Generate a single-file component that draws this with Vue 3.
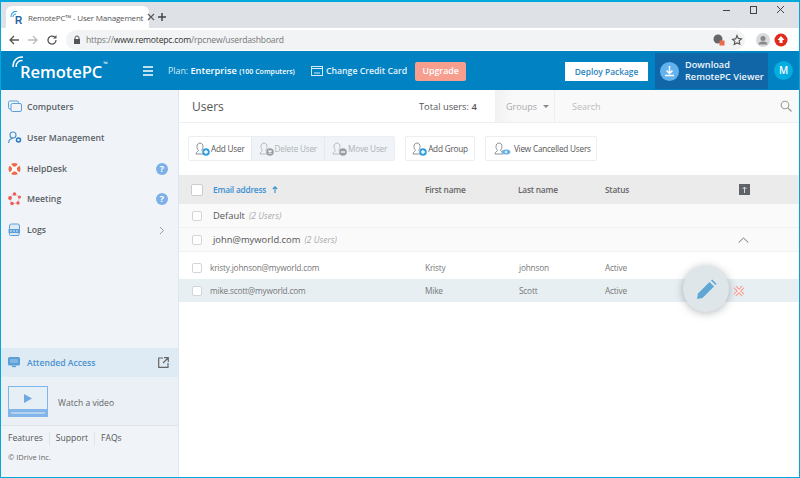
<template>
  <div class="window">
    <!-- browser chrome -->
    <div class="tabstrip">
      <div class="tab">
        <svg class="favicon" width="14" height="16" viewBox="0 0 14 16">
          <path d="M1 8a5 5 0 0 1 6-5.500M3 8a3 3 0 0 1 3-3" fill="none" stroke="#3aa6e8" stroke-width="1.200" />
          <text x="5" y="14.500" class="favicon-r">R</text>
        </svg>
        <span class="tab-title">RemotePC™ - User Management</span>
        <svg class="tab-close" width="8" height="8" viewBox="0 0 8 8"><path d="M1 1l6 6M7 1L1 7" stroke="#555" stroke-width="1.100" /></svg>
      </div>
      <svg class="newtab" width="8" height="8" viewBox="0 0 8 8"><path d="M4 0v8M0 4h8" stroke="#444" stroke-width="1.500" /></svg>
      <div class="winbtns">
        <svg width="10" height="10" viewBox="0 0 10 10"><path d="M1 5.500h7" stroke="#444" /></svg>
        <svg width="10" height="10" viewBox="0 0 10 10"><rect x="1.500" y="1.500" width="6" height="7" fill="none" stroke="#444" /></svg>
        <svg width="10" height="10" viewBox="0 0 10 10"><path d="M1 1l7 7M8 1L1 8" stroke="#444" /></svg>
      </div>
    </div>
    <div class="addrbar">
      <svg width="12" height="12" viewBox="0 0 12 12"><path d="M11 6H2M6 2L2 6l4 4" fill="none" stroke="#555" stroke-width="1.300" /></svg>
      <svg width="12" height="12" viewBox="0 0 12 12"><path d="M1 6h9M6 2l4 4-4 4" fill="none" stroke="#bbb" stroke-width="1.300" /></svg>
      <svg width="12" height="12" viewBox="0 0 12 12"><path d="M10 6a4 4 0 1 1-1.200-2.800" fill="none" stroke="#555" stroke-width="1.300" /><path d="M10.500 1v3.500H7z" fill="#555" /></svg>
      <div class="omnibox">
        <svg width="8" height="10" viewBox="0 0 8 10"><rect x="1" y="4" width="6" height="5" fill="#555" /><path d="M2 4V3a2 2 0 0 1 4 0v1" fill="none" stroke="#555" /></svg>
        <span class="url"><span class="url-dim">https://</span>www.remotepc.com<span class="url-dim">/rpcnew/userdashboard</span></span>
        <svg width="14" height="14" viewBox="0 0 14 14"><circle cx="6" cy="6" r="4.500" fill="#666" /><rect x="7.500" y="7.500" width="5" height="5" fill="#ea6a4a" /></svg>
        <svg class="omni-star" width="12" height="12" viewBox="0 0 12 12"><path d="M6 1.500l1.300 2.900 3.200.4-2.400 2.100.7 3.100L6 8.900l-2.800 1.600.7-3.100-2.400-2.100 3.200-.4z" fill="none" stroke="#555" stroke-width="1.100" /></svg>
      </div>
      <svg class="avatar" width="14" height="14" viewBox="0 0 14 14"><circle cx="7" cy="7" r="7" fill="#d8dadd" /><circle cx="7" cy="5.500" r="2.500" fill="#888" /><path d="M2.500 11.500a4.500 3 0 0 1 9 0z" fill="#888" /></svg>
      <svg class="ext" width="14" height="14" viewBox="0 0 14 14"><circle cx="7" cy="7" r="6.500" fill="#e02b1c" /><path d="M7 3l3.500 4H8.500v3h-3V7H3.500z" fill="#fff" /></svg>
    </div>

    <!-- app header -->
    <header class="topbar">
      <div class="logo">
        <svg class="logo-arcs" width="12" height="12" viewBox="0 0 12 12"><path d="M1.200 11a8.500 8.500 0 0 1 9.800-9.800M4.200 11a5.500 5.500 0 0 1 6.300-6.300" fill="none" stroke="#fff" stroke-width="1.500" /></svg>
        <span class="logo-text">RemotePC</span><span class="logo-tm">™</span>
      </div>
      <svg class="burger" width="14" height="10" viewBox="0 0 14 10"><path d="M2 1h10M2 5h10M2 9h10" stroke="#fff" stroke-width="1.300" /></svg>
      <div class="plan">Plan: <b>Enterprise</b> <b class="plan-small">(100 Computers)</b></div>
      <div class="card-link">
        <svg width="12" height="10" viewBox="0 0 12 10"><rect x=".5" y=".5" width="11" height="9" fill="none" stroke="#d6ecf8" /><path d="M1 2.500h10M3 7h6" stroke="#d6ecf8" /></svg>
        <span>Change Credit Card</span>
      </div>
      <div class="upgrade">Upgrade</div>
      <div class="deploy">Deploy Package</div>
      <div class="download">
        <svg width="19" height="19" viewBox="0 0 19 19"><circle cx="9.500" cy="9.500" r="9.500" fill="#62b2ee" /><path d="M9.500 4v7M6.500 8.500l3 3 3-3M5 13.500h9" fill="none" stroke="#fff" stroke-width="1.500" /></svg>
        <div class="download-text">Download<br />RemotePC Viewer</div>
      </div>
      <div class="user-badge">M</div>
    </header>

    <div class="body">
      <aside class="sidebar">
        <nav class="nav">
          <div v-for="item in navItems" :key="item.name" class="nav-item">
            <svg class="nav-icon" width="14" height="14" viewBox="0 0 14 14" v-html="item.icon"></svg>
            <span class="nav-label">{{ item.name }}</span>
            <span v-if="item.help" class="help">?</span>
            <svg v-if="item.arrow" class="nav-arrow" width="6" height="9" viewBox="0 0 6 9"><path d="M1 1l3.500 3.500L1 8" fill="none" stroke="#999" /></svg>
          </div>
        </nav>
        <div class="attended">
          <svg width="12" height="11" viewBox="0 0 12 11"><rect width="12" height="8.500" rx="1.500" fill="#5a9fd8" /><path d="M2 3h8M2 5h8" stroke="#cfe4f5" stroke-width=".7" /><path d="M4 9.500h4" stroke="#5a9fd8" stroke-width="1.300" /></svg>
          <span class="attended-label">Attended Access</span>
          <svg width="11" height="11" viewBox="0 0 11 11"><path d="M5 1H.7v9.300H10V6M6 .7h4.300V5M10 1L5 6" fill="none" stroke="#666" stroke-width="1.200" /></svg>
        </div>
        <div class="video">
          <svg width="40" height="31" viewBox="0 0 40 31"><rect x=".5" y=".5" width="39" height="30" fill="#e6eef6" stroke="#82b6e8" /><rect y="23" width="40" height="8" fill="#82b6e8" /><path d="M16 8l8 4.500-8 4.500z" fill="#6ea9e2" /><path d="M3 27h34" stroke="#e6eef6" /></svg>
          <span class="video-label">Watch a video</span>
        </div>
        <div class="links">
          <span>Features</span><span>Support</span><span>FAQs</span>
        </div>
        <div class="copy">© IDrive Inc.</div>
      </aside>

      <main class="main">
        <div class="title-row">
          <h1>Users</h1>
          <div class="total">Total users: <b>4</b></div>
          <div class="filter">
            <div class="groups">Groups <i class="caret"></i></div>
            <div class="search">
              <span>Search</span>
              <svg width="12" height="12" viewBox="0 0 12 12"><circle cx="5" cy="5" r="3.800" fill="none" stroke="#999" stroke-width="1.100" /><path d="M8 8l3.500 3.500" stroke="#999" stroke-width="1.300" /></svg>
            </div>
          </div>
        </div>

        <div class="toolbar">
          <div class="btn-group">
            <div class="tbtn"><svg width="15" height="14" viewBox="0 0 15 14" v-html="userIcon('#8a9099', '#2f9fe0', 'plus')"></svg>Add User</div>
            <div class="tbtn off"><svg width="15" height="14" viewBox="0 0 15 14" v-html="userIcon('#b8bcc0', '#9a9ea2', 'x')"></svg>Delete User</div>
            <div class="tbtn off"><svg width="15" height="14" viewBox="0 0 15 14" v-html="userIcon('#b8bcc0', '#9a9ea2', 'minus')"></svg>Move User</div>
          </div>
          <div class="tbtn solo"><svg width="15" height="14" viewBox="0 0 15 14" v-html="userIcon('#8a9099', '#2f9fe0', 'plus')"></svg>Add Group</div>
          <div class="tbtn solo cancelled"><svg width="19" height="14" viewBox="0 0 19 14"><path d="M3 12c0-2 2-2.500 2.500-3.500C4.500 7.500 4 6 4 4.500 4 2.500 5.200 1 7 1s3 1.500 3 3.500c0 1.500-.5 3-1.500 4 .5 1 2 1.200 2.500 2" fill="none" stroke="#8a9099" /><path d="M3 12h8" stroke="#8a9099" /><ellipse cx="14" cy="10" rx="4.500" ry="2.500" fill="#6fb2e2" /><circle cx="14" cy="10" r="1" fill="#fff" /></svg>View Cancelled Users</div>
        </div>

        <div class="grid head">
          <span class="check big"></span>
          <span class="sort">Email address <svg width="6" height="7" viewBox="0 0 6 7"><path d="M3 7V1M.8 3L3 .8 5.200 3" fill="none" stroke="#3a8fd0" stroke-width="1.100" /></svg></span>
          <span>First name</span>
          <span>Last name</span>
          <span>Status</span>
          <span class="export"><svg width="11" height="11" viewBox="0 0 11 11"><rect width="11" height="11" fill="#5f6368" /><path d="M5.500 9V3M3.500 5l2-2 2 2" fill="none" stroke="#d5d7da" /></svg></span>
        </div>

        <div class="group">
          <span class="check"></span>
          <span class="group-name">Default</span>
          <em>(2 Users)</em>
        </div>
        <div class="group">
          <span class="check"></span>
          <span class="group-name">john@myworld.com</span>
          <em>(2 Users)</em>
          <svg class="collapse" width="11" height="6" viewBox="0 0 11 6"><path d="M.7 5.500L5.500 1l4.800 4.500" fill="none" stroke="#777" /></svg>
        </div>

        <div class="grid row" v-for="user in users" :key="user.email" :class="{ hovered: user.hovered }">
          <span class="check"></span>
          <span>{{ user.email }}</span>
          <span>{{ user.first }}</span>
          <span>{{ user.last }}</span>
          <span>{{ user.status }}</span>
          <span class="row-actions">
            <template v-if="user.hovered">
              <span class="pencil">
                <svg width="21" height="21" viewBox="0 0 21 21"><path d="M1 20l1-5.500L13.500 3l4.500 4.500L6.500 19z" fill="#5fa6d3" /><path d="M15 1.500l1.200-1 4.300 4.300-1 1.200z" fill="#5fa6d3" /></svg>
              </span>
              <svg class="remove" width="12" height="12" viewBox="0 0 12 12"><path d="M2 2l8 8M10 2l-8 8" stroke="#f09a90" stroke-width="3.500" /><path d="M2 2l8 8M10 2l-8 8" stroke="#fdf1ef" stroke-width="1.500" /></svg>
            </template>
          </span>
        </div>
      </main>
    </div>
  </div>
</template>

<script setup>
const navItems = [
  { name: 'Computers', icon: '<rect x=".5" y="1" width="10" height="8" rx="1.500" fill="none" stroke="#5a9fd8"/><rect x="3" y="3.500" width="10.500" height="8" rx="1.500" fill="#f0f4f8" stroke="#5a9fd8"/>' },
  { name: 'User Management', icon: '<circle cx="5" cy="4" r="3" fill="none" stroke="#4a90d0" stroke-width="1.100"/><path d="M.7 12c0-3 2-4.500 4.300-4.500" fill="none" stroke="#4a90d0" stroke-width="1.100"/><circle cx="10.500" cy="9" r="2" fill="none" stroke="#2a78c0" stroke-width="1.500"/>' },
  { name: 'HelpDesk', help: true, icon: '<circle cx="6.500" cy="7" r="6" fill="#ee6a48"/><circle cx="6.500" cy="7" r="2.600" fill="#fff"/><path d="M2 2.500l3 3M11 2.500l-3 3M2 11.500l3-3M11 11.500l-3-3" stroke="#fff" stroke-width="1.800"/>' },
  { name: 'Meeting', help: true, icon: '<circle cx="6.500" cy="7" r="4.500" fill="none" stroke="#f08a85" stroke-width=".6"/><circle cx="6.500" cy="2" r="1.700" fill="#ee5a58"/><circle cx="11.500" cy="5" r="1.500" fill="#ee5a58"/><circle cx="10" cy="11" r="1.700" fill="#ee5a58"/><circle cx="4" cy="11.500" r="1.800" fill="#ee5a58"/><circle cx="2" cy="6" r="1.900" fill="#ee5a58"/>' },
  { name: 'Logs', arrow: true, icon: '<path d="M1.500 7V3a2 2 0 0 1 2-2h6a2 2 0 0 1 2 2v4" fill="#dcebf6" stroke="#5a9fd8"/><rect x=".5" y="6" width="11.500" height="4" fill="#5a9fd8"/><path d="M2 8h8.500" stroke="#dcebf6" stroke-dasharray="2 1"/><path d="M1.500 10v1.500a1 1 0 0 0 1 1h7.500a1 1 0 0 0 1-1V10" fill="#dcebf6" stroke="#5a9fd8"/>' },
]

const users = [
  { email: 'kristy.johnson@myworld.com', first: 'Kristy', last: 'johnson', status: 'Active' },
  { email: 'mike.scott@myworld.com', first: 'Mike', last: 'Scott', status: 'Active', hovered: true },
]

// little person outline with a round badge, shared by the toolbar buttons
const userIcon = (line, badge, mark) => {
  const marks = {
    plus: 'M10.500 10h4M12.500 8v4',
    x: 'M11 8.500l3 3M14 8.500l-3 3',
    minus: 'M10.500 10h4',
  }
  return `<path d="M1 12c0-2 2-2.500 2.500-3.500C2.500 7.500 2 6 2 4.500 2 2.500 3.200 1 5 1s3 1.500 3 3.500c0 1.500-.5 3-1.500 4" fill="none" stroke="${line}"/><path d="M1 12h8" stroke="${line}"/><circle cx="11" cy="10" r="3.800" fill="${badge}"/><path transform="translate(-1.500)" d="${marks[mark]}" stroke="#fff" stroke-width="1.300"/>`
}
</script>

<style>
html, body { margin: 0; background: #fff; }
</style>

<style scoped>
.window {
  width: 800px;
  height: 478px;
  box-sizing: border-box;
  border: 1px solid #00a8dc;
  border-top-width: 2px;
  display: flex;
  flex-direction: column;
  overflow: hidden;
  font-family: "Open Sans", "Liberation Sans", sans-serif;
  color: #555;
}
svg { flex: none; }
.tabstrip {
  height: 26px;
  background: #dee1e6;
  display: flex;
  align-items: flex-end;
  flex: none;
}
.tab {
  width: 143px;
  height: 22px;
  margin-left: 5px;
  background: #fff;
  border-radius: 6px 6px 0 0;
  display: flex;
  align-items: center;
  padding: 0 5px 0 4px;
  box-sizing: border-box;
  gap: 4px;
  flex: none;
}
.favicon-r { font: bold 10px "Liberation Sans", sans-serif; fill: #1f5f9e; }
.tab-title { font-size: 8px; letter-spacing: -.2px; color: #555; white-space: nowrap; flex: 1; }
.newtab { margin: 0 0 7px 9px; }
.winbtns {
  margin-left: auto;
  align-self: flex-start;
  padding: 3px 13px 0 0;
  display: flex;
  gap: 17px;
}
.addrbar {
  height: 23px;
  background: #fff;
  flex: none;
  display: flex;
  align-items: center;
  padding: 0 11px 0 7px;
  gap: 7px;
}
.omnibox {
  flex: 1;
  margin-left: 1px;
  height: 20px;
  background: #f1f3f4;
  border-radius: 10px;
  display: flex;
  align-items: center;
  padding: 0 0 0 7px;
  gap: 5px;
}
.url { font-size: 8.600px; letter-spacing: -.2px; color: #333; flex: 1; }
.url-dim { color: #777; }
.omni-star { margin-right: 2px; }
.avatar { margin-left: 4px; }
.ext { margin-left: -3px; }
.topbar {
  height: 39px;
  flex: none;
  background: #0082c3;
  display: flex;
  align-items: center;
  color: #fff;
}
.logo {
  width: 130px;
  position: relative;
  padding-left: 19px;
  box-sizing: border-box;
  display: flex;
  align-items: flex-start;
  flex: none;
}
.logo-arcs { position: absolute; left: 11px; top: -3px; }
.logo-text { font-size: 16.600px; font-weight: 600; line-height: 22px; margin-top: 2px; letter-spacing: -.1px; }
.logo-tm { font-size: 6px; margin: 0 0 0 1px; line-height: 10px; }
.burger { margin-left: 10px; }
.plan { margin-left: 13px; width: 143px; font-size: 8.800px; color: #d8edf8; white-space: nowrap; flex: none; }
.plan b { color: #fff; font-weight: 600; font-size: 9.300px; }
.plan .plan-small { font-size: 7px; }
.card-link {
  display: flex;
  align-items: center;
  gap: 3px;
  font-size: 8.700px;
  font-weight: 600;
  white-space: nowrap;
  color: #e6f3fb;
}
.upgrade {
  margin-left: 8px;
  width: 51px;
  height: 19px;
  background: #f79e8e;
  border-radius: 2px;
  text-align: center;
  font-size: 8.800px;
  font-weight: 600;
  line-height: 19px;
  margin-top: 1px;
}
.deploy {
  margin-left: auto;
  width: 83px;
  height: 19px;
  background: #fff;
  color: #2b82c0;
  text-align: center;
  font-size: 8.400px;
  font-weight: 600;
  line-height: 19px;
  margin-top: 1px;
}
.download {
  margin-left: 7px;
  width: 113px;
  height: 36px;
  background: #1166a8;
  display: flex;
  align-items: center;
  padding-left: 5px;
  box-sizing: border-box;
  gap: 6px;
  align-self: flex-start;
  margin-top: 2px;
}
.download-text { font-size: 9.200px; font-weight: 600; line-height: 12px; white-space: nowrap; color: #eef6fc; }
.user-badge {
  width: 19px;
  height: 19px;
  border-radius: 50%;
  background: #04acdf;
  margin: 0 6px 0 6px;
  text-align: center;
  font-size: 10px;
  font-weight: 600;
  line-height: 19px;
  flex: none;
}
.body { flex: 1; display: flex; min-height: 0; }
.sidebar {
  width: 177px;
  flex: none;
  background: #f0f4f8;
  border-right: 1px solid #dfe7ee;
  display: flex;
  flex-direction: column;
}
.nav { flex: 1; padding-top: 2px; }
.nav-item {
  height: 30.700px;
  display: flex;
  align-items: center;
  padding: 0 10px 0 7px;
}
.nav-label { margin-left: 5px; font-size: 8.700px; font-weight: 600; color: #5a5f66; flex: 1; white-space: nowrap; }
.help {
  width: 12px;
  height: 12px;
  border-radius: 50%;
  background: #7db0e8;
  color: #fff;
  font-size: 9px;
  font-weight: 700;
  line-height: 12px;
  text-align: center;
}
.nav-arrow { margin-right: 3px; }
.attended {
  height: 29px;
  background: #deebf4;
  display: flex;
  align-items: center;
  padding: 0 9px 0 7px;
  gap: 7px;
  flex: none;
}
.attended-label { flex: 1; font-size: 8.600px; font-weight: 600; color: #4a90d0; }
.video {
  height: 48px;
  background: #eaf0f5;
  border-bottom: 1px solid #dde4ea;
  display: flex;
  align-items: center;
  padding-left: 7px;
  gap: 10px;
  font-size: 8.600px;
  color: #666;
  flex: none;
}
.video-label { margin-top: 3px; }
.links {
  display: flex;
  font-size: 8.600px;
  color: #555;
  padding: 6px 0 0 7px;
  flex: none;
}
.links span { padding-right: 6px; margin-right: 6px; border-right: 1px solid #dde4ea; line-height: 13px; }
.links span:last-child { border: 0; }
.copy { font-size: 7.500px; line-height: 10px; color: #666; padding: 7px 0 15px 7px; flex: none; }
.main { flex: 1; min-width: 0; }
.title-row {
  height: 33px;
  display: flex;
  align-items: center;
  border-bottom: 1px solid #edf0f2;
  box-sizing: border-box;
}
h1 { margin: 0 0 0 13px; font-size: 12px; font-weight: 400; color: #555; width: 227px; flex: none; }
.total { width: 76px; font-size: 9.300px; color: #555; white-space: nowrap; flex: none; }
.total b { font-weight: 600; }
.filter {
  flex: 1;
  height: 100%;
  display: flex;
  align-items: center;
  background: linear-gradient(90deg, #f1f1f1, #f9f9f9 6%);
  color: #aaa;
  font-size: 9px;
}
.groups {
  width: 60px;
  padding-left: 11px;
  box-sizing: border-box;
  height: 100%;
  display: flex;
  align-items: center;
  gap: 6px;
  border-right: 1px solid #eceeef;
}
.caret {
  width: 0;
  height: 0;
  border: 3px solid transparent;
  border-top: 3px solid #888;
  border-bottom: 0;
}
.search {
  flex: 1;
  display: flex;
  justify-content: space-between;
  align-items: center;
  padding: 0 7px 0 17px;
  color: #bbb;
}
.toolbar {
  height: 52px;
  box-sizing: border-box;
  padding: 13px 0 0 9px;
  display: flex;
  align-items: flex-start;
  gap: 10px;
}
.btn-group {
  display: flex;
  border: 1px solid #eceff1;
  border-radius: 2px;
  height: 25px;
  box-sizing: border-box;
}
.tbtn {
  display: flex;
  align-items: center;
  gap: 1px;
  font-size: 8.200px;
  letter-spacing: -.2px;
  color: #555;
  height: 23px;
  padding: 0 6px;
  white-space: nowrap;
}
.tbtn.off { background: #f0f4f8; color: #aeb2b6; border-left: 1px solid #e6eaee; padding: 0 7px; }
.tbtn.solo { border: 1px solid #eceff1; border-radius: 2px; height: 25px; box-sizing: border-box; }
.tbtn.cancelled { gap: 3px; padding: 0 5px 0 6px; }
.grid {
  display: grid;
  grid-template-columns: 22px 212px 93px 87px 90px 1fr;
  align-items: center;
  padding-left: 12px;
  font-size: 8.300px;
  letter-spacing: -.2px;
}
.head {
  height: 29px;
  background: #ebebeb;
  font-weight: 600;
  color: #666;
}
.sort { color: #3a8fd0; display: flex; align-items: center; gap: 6px; }
.export { padding-left: 44px; display: flex; }
.check {
  width: 8px;
  height: 8px;
  border: 1px solid #d2d5d8;
  border-radius: 2px;
  background: #fff;
  display: block;
  flex: none;
}
.check.big { width: 10px; height: 10px; border-color: #ccc; }
.group {
  height: 24px;
  background: #fafafa;
  border-bottom: 1px solid #f1f1f1;
  box-sizing: border-box;
  display: flex;
  align-items: center;
  padding-left: 13px;
  font-size: 9.400px;
  color: #555;
}
.group .group-name { margin-left: 11px; }
.group em { font-size: 8.500px; color: #aaa; margin-left: 4px; }
.collapse { margin-left: auto; margin-right: 50px; }
.row {
  grid-template-columns: 19px 215px 94px 86px 90px 1fr;
  height: 23px;
  color: #777;
}
.group + .row { margin-top: 4px; }
.row .check { margin-left: 1px; }
.row.hovered { background: #e7eff3; }
.row-actions { position: relative; height: 100%; }
.pencil {
  position: absolute;
  left: -12px;
  top: -13px;
  width: 46px;
  height: 46px;
  border-radius: 50%;
  background: #dfe6ea;
  box-shadow: 0 1px 9px rgba(60, 70, 80, .4);
  display: flex;
  align-items: center;
  justify-content: center;
}
.remove { position: absolute; left: 38px; top: 6px; }
</style>
